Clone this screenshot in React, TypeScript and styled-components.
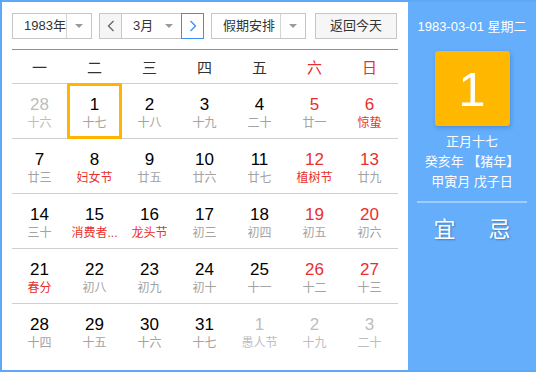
import styled, { createGlobalStyle } from 'styled-components';

const GlobalStyle = createGlobalStyle`
  body {
    margin: 0;
    font-family: "Liberation Sans", "Noto Sans CJK SC", sans-serif;
  }
`;

const RED = '#e8302f';
const BLUE = '#64aefc';

const Frame = styled.div`
  display: flex;
  width: 536px;
  height: 372px;
  box-sizing: border-box;
  border: 2px solid #5ea8f7;
  border-right: none;
  background: #fff;
`;

const Main = styled.div`
  width: 406px;
  padding: 11px 10px 0;
  box-sizing: border-box;
  display: flex;
  flex-direction: column;
`;

const Toolbar = styled.div`
  display: flex;
  gap: 7px;
  height: 26px;
  padding-bottom: 10px;
  border-bottom: 1px solid #4d9ff4;
`;

const SelectBox = styled.div<{ $w: number }>`
  display: flex;
  width: ${(p) => p.$w}px;
  height: 26px;
  box-sizing: border-box;
  border: 1px solid #c6c6c6;
  background: #fff;
  font-size: 13px;
  color: #333;
`;

const SelectLabel = styled.div<{ $pl?: number }>`
  flex: 1;
  padding-left: ${(p) => p.$pl ?? 11}px;
  line-height: 24px;
`;

const SelectArrow = styled.div<{ $divider?: boolean }>`
  width: 24px;
  display: flex;
  align-items: center;
  justify-content: center;
  border-left: ${(p) => (p.$divider ? '1px solid #d4d4d4' : 'none')};

  &::after {
    content: '';
    border-left: 4px solid transparent;
    border-right: 4px solid transparent;
    border-top: 4px solid #9a9a9a;
  }
`;

const MonthGroup = styled.div`
  display: flex;
`;

const NavButton = styled.div<{ $active?: boolean }>`
  width: 23px;
  height: 26px;
  box-sizing: border-box;
  display: flex;
  align-items: center;
  justify-content: center;
  border: 1px solid ${(p) => (p.$active ? '#3a8ff0' : '#c6c6c6')};
  background: ${(p) => (p.$active ? '#fff' : '#f5f5f5')};
  color: ${(p) => (p.$active ? '#3a8ff0' : '#666')};
`;

const MonthSelect = styled(SelectBox)`
  border-left: none;
  border-right: none;
`;

const TodayButton = styled.div`
  width: 82px;
  height: 26px;
  margin-left: 2px;
  box-sizing: border-box;
  border: 1px solid #c6c6c6;
  background: #f6f6f6;
  font-size: 13px;
  color: #333;
  line-height: 24px;
  text-align: center;
`;

const Grid = styled.div`
  display: grid;
  grid-template-columns: repeat(7, 55px);
`;

const WeekHead = styled(Grid)`
  height: 33px;
  border-bottom: 1px solid #cfcfcf;
  align-items: center;
`;

const WeekDay = styled.div<{ $red?: boolean }>`
  text-align: center;
  font-size: 15px;
  color: ${(p) => (p.$red ? RED : '#333')};
`;

const WeekRow = styled(Grid)<{ $last?: boolean }>`
  height: 54px;
  border-bottom: ${(p) => (p.$last ? 'none' : '1px solid #cfcfcf')};
`;

const Cell = styled.div<{ $selected?: boolean }>`
  position: relative;
  display: flex;
  flex-direction: column;
  align-items: center;
  padding-top: 11px;

  &::after {
    content: '';
    display: ${(p) => (p.$selected ? 'block' : 'none')};
    position: absolute;
    left: 0;
    right: 0;
    top: -1px;
    bottom: -1px;
    border: 3px solid #ffb400;
  }
`;

const DayNum = styled.div<{ $tone: 'normal' | 'red' | 'muted' }>`
  font-size: 17px;
  line-height: 20px;
  color: ${(p) => (p.$tone === 'red' ? RED : p.$tone === 'muted' ? '#bdbdbd' : '#000')};
`;

const Lunar = styled.div<{ $tone: 'normal' | 'red' | 'muted' }>`
  font-size: 12px;
  line-height: 16px;
  white-space: nowrap;
  color: ${(p) => (p.$tone === 'red' ? RED : p.$tone === 'muted' ? '#bdbdbd' : '#a3a3a3')};
`;

const Side = styled.div`
  flex: 1;
  background: ${BLUE};
  color: #fff;
  display: flex;
  flex-direction: column;
  align-items: center;
  padding-top: 16px;
`;

const DateLine = styled.div`
  font-size: 13px;
  line-height: 18px;
`;

const DayCard = styled.div`
  width: 75px;
  height: 75px;
  margin-top: 15px;
  border-radius: 3px;
  background: #ffb700;
  box-shadow: 1px 2px 4px rgba(40, 90, 160, 0.35);
  display: flex;
  align-items: center;
  justify-content: center;
  font-size: 49px;
  font-family: "Liberation Sans", sans-serif;
`;

const LunarInfo = styled.div`
  margin-top: 6px;
  font-size: 13px;
  line-height: 20px;
  text-align: center;
`;

const Divider = styled.div`
  width: 110px;
  height: 2px;
  margin-top: 9px;
  background: #9fcdfd;
`;

const Advice = styled.div`
  width: 110px;
  margin-top: 12px;
  display: flex;
  justify-content: space-around;
  font-size: 22px;
  line-height: 30px;
  text-shadow: 1px 1px 2px rgba(0, 0, 0, 0.3);
`;

const Chevron = ({ dir }: { dir: 'left' | 'right' }) => (
  <svg width="8" height="12" viewBox="0 0 8 12">
    <polyline
      points={dir === 'left' ? '6.5,1 1.5,6 6.5,11' : '1.5,1 6.5,6 1.5,11'}
      fill="none"
      stroke="currentColor"
      strokeWidth="1.3"
    />
  </svg>
);

type Day = {
  n: number;
  lunar: string;
  fest?: boolean;
  other?: boolean;
  selected?: boolean;
};

const weeks: Day[][] = [
  [
    { n: 28, lunar: '十六', other: true },
    { n: 1, lunar: '十七', selected: true },
    { n: 2, lunar: '十八' },
    { n: 3, lunar: '十九' },
    { n: 4, lunar: '二十' },
    { n: 5, lunar: '廿一' },
    { n: 6, lunar: '惊蛰', fest: true },
  ],
  [
    { n: 7, lunar: '廿三' },
    { n: 8, lunar: '妇女节', fest: true },
    { n: 9, lunar: '廿五' },
    { n: 10, lunar: '廿六' },
    { n: 11, lunar: '廿七' },
    { n: 12, lunar: '植树节', fest: true },
    { n: 13, lunar: '廿九' },
  ],
  [
    { n: 14, lunar: '三十' },
    { n: 15, lunar: '消费者...', fest: true },
    { n: 16, lunar: '龙头节', fest: true },
    { n: 17, lunar: '初三' },
    { n: 18, lunar: '初四' },
    { n: 19, lunar: '初五' },
    { n: 20, lunar: '初六' },
  ],
  [
    { n: 21, lunar: '春分', fest: true },
    { n: 22, lunar: '初八' },
    { n: 23, lunar: '初九' },
    { n: 24, lunar: '初十' },
    { n: 25, lunar: '十一' },
    { n: 26, lunar: '十二' },
    { n: 27, lunar: '十三' },
  ],
  [
    { n: 28, lunar: '十四' },
    { n: 29, lunar: '十五' },
    { n: 30, lunar: '十六' },
    { n: 31, lunar: '十七' },
    { n: 1, lunar: '愚人节', other: true },
    { n: 2, lunar: '十九', other: true },
    { n: 3, lunar: '二十', other: true },
  ],
];

const weekdays = ['一', '二', '三', '四', '五', '六', '日'];

export default function App() {
  return (
    <>
      <GlobalStyle />
      <Frame>
        <Main>
          <Toolbar>
            <SelectBox $w={80}>
              <SelectLabel>1983年</SelectLabel>
              <SelectArrow $divider />
            </SelectBox>
            <MonthGroup>
              <NavButton>
                <Chevron dir="left" />
              </NavButton>
              <MonthSelect $w={59}>
                <SelectLabel $pl={11}>3月</SelectLabel>
                <SelectArrow />
              </MonthSelect>
              <NavButton $active>
                <Chevron dir="right" />
              </NavButton>
            </MonthGroup>
            <SelectBox $w={95}>
              <SelectLabel>假期安排</SelectLabel>
              <SelectArrow $divider />
            </SelectBox>
            <TodayButton>返回今天</TodayButton>
          </Toolbar>

          <WeekHead>
            {weekdays.map((w, i) => (
              <WeekDay key={w} $red={i >= 5}>
                {w}
              </WeekDay>
            ))}
          </WeekHead>

          {weeks.map((week, wi) => (
            <WeekRow key={wi} $last={wi === weeks.length - 1}>
              {week.map((d, di) => {
                const numTone = d.other ? 'muted' : di >= 5 ? 'red' : 'normal';
                const lunarTone = d.other ? 'muted' : d.fest ? 'red' : 'normal';
                return (
                  <Cell key={di} $selected={d.selected}>
                    <DayNum $tone={numTone}>{d.n}</DayNum>
                    <Lunar $tone={lunarTone}>{d.lunar}</Lunar>
                  </Cell>
                );
              })}
            </WeekRow>
          ))}
        </Main>

        <Side>
          <DateLine>1983-03-01 星期二</DateLine>
          <DayCard>1</DayCard>
          <LunarInfo>
            <div>正月十七</div>
            <div>癸亥年 【猪年】</div>
            <div>甲寅月 戊子日</div>
          </LunarInfo>
          <Divider />
          <Advice>
            <span>宜</span>
            <span>忌</span>
          </Advice>
        </Side>
      </Frame>
    </>
  );
}
